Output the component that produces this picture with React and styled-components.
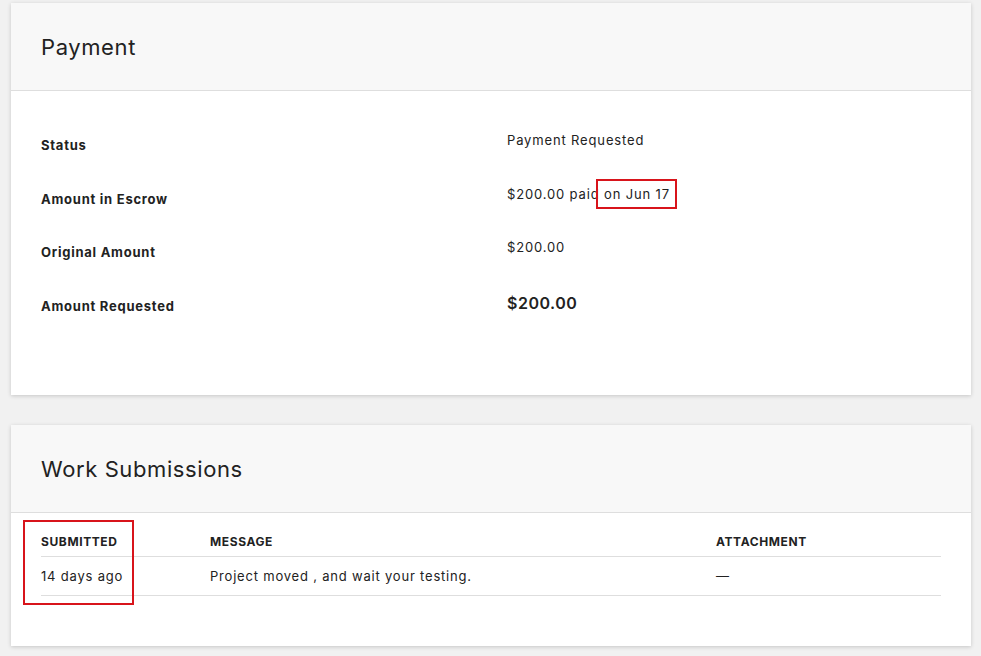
import React from 'react';
import styled, { createGlobalStyle } from 'styled-components';

const GlobalStyle = createGlobalStyle`
  * {
    box-sizing: border-box;
    margin: 0;
    padding: 0;
  }
  body {
    background: #f1f1f1;
    font-family: Inter, "Open Sans", sans-serif;
    color: #222;
  }
`

const Page = styled.div`
  position: relative;
  padding: 3px 10px 10px 11px;
  display: flex;
  flex-direction: column;
  gap: 30px;
`

const Card = styled.section`
  background: #fff;
  box-shadow: 0 1px 4px rgba(0, 0, 0, 0.18);
`

const CardHeader = styled.header`
  height: 88px;
  background: #f8f8f8;
  border-bottom: 1px solid #dedede;
  display: flex;
  align-items: center;
  padding: 0 30px;
`

const Title = styled.h2`
  font-size: 22px;
  font-weight: 400;
  color: #222;
  letter-spacing: 0.6px;
`

const PaymentBody = styled.div`
  padding: 39px 30px 51px;
`

const Row = styled.div`
  display: flex;
  align-items: flex-start;
  height: 53.5px;
`

const Label = styled.div`
  width: 466px;
  font-size: 13px;
  font-weight: 700;
  line-height: 20px;
  padding-top: 5px;
  letter-spacing: 0.75px;
`

const Value = styled.div`
  font-size: ${p => (p.big ? '16px' : '13px')};
  font-weight: ${p => (p.big ? 600 : 400)};
  line-height: ${p => (p.big ? '24px' : '20px')};
  letter-spacing: ${p => (p.big ? '0.5px' : '0.85px')};
`

const TableWrap = styled.div`
  padding: 0 30px 50px;
`

const Table = styled.table`
  width: 100%;
  border-collapse: collapse;
`

const Th = styled.th`
  text-align: left;
  font-size: 12px;
  font-weight: 700;
  text-transform: uppercase;
  letter-spacing: 0.6px;
  line-height: 18px;
  padding: 20px 0 5px;
  border-bottom: 1px solid #dedede;
  width: ${p => p.w}px;
`

const Td = styled.td`
  font-size: 13px;
  line-height: 20px;
  padding: 9px 0;
  border-bottom: 1px solid #dedede;
  letter-spacing: 0.8px;
`

const Highlight = styled.div`
  position: absolute;
  border: 2px solid #d8141b;
  left: ${p => p.x}px;
  top: ${p => p.y}px;
  width: ${p => p.w}px;
  height: ${p => p.h}px;
`

const rows = [
  { label: 'Status', value: 'Payment Requested' },
  { label: 'Amount in Escrow', value: '$200.00 paid on Jun 17' },
  { label: 'Original Amount', value: '$200.00' },
  { label: 'Amount Requested', value: '$200.00', big: true },
]

export default function App() {
  return (
    <Page>
      <GlobalStyle />
      <Card>
        <CardHeader>
          <Title>Payment</Title>
        </CardHeader>
        <PaymentBody>
          {rows.map(r => (
            <Row key={r.label}>
              <Label>{r.label}</Label>
              <Value big={r.big}>{r.value}</Value>
            </Row>
          ))}
        </PaymentBody>
      </Card>
      <Card>
        <CardHeader>
          <Title>Work Submissions</Title>
        </CardHeader>
        <TableWrap>
          <Table>
            <thead>
              <tr>
                <Th w={169}>Submitted</Th>
                <Th w={506}>Message</Th>
                <Th>Attachment</Th>
              </tr>
            </thead>
            <tbody>
              <tr>
                <Td>14 days ago</Td>
                <Td>Project moved , and wait your testing.</Td>
                <Td>—</Td>
              </tr>
            </tbody>
          </Table>
        </TableWrap>
      </Card>
      <Highlight x={596} y={179} w={81} h={30} />
      <Highlight x={23} y={520} w={111} h={85} />
    </Page>
  );
}
